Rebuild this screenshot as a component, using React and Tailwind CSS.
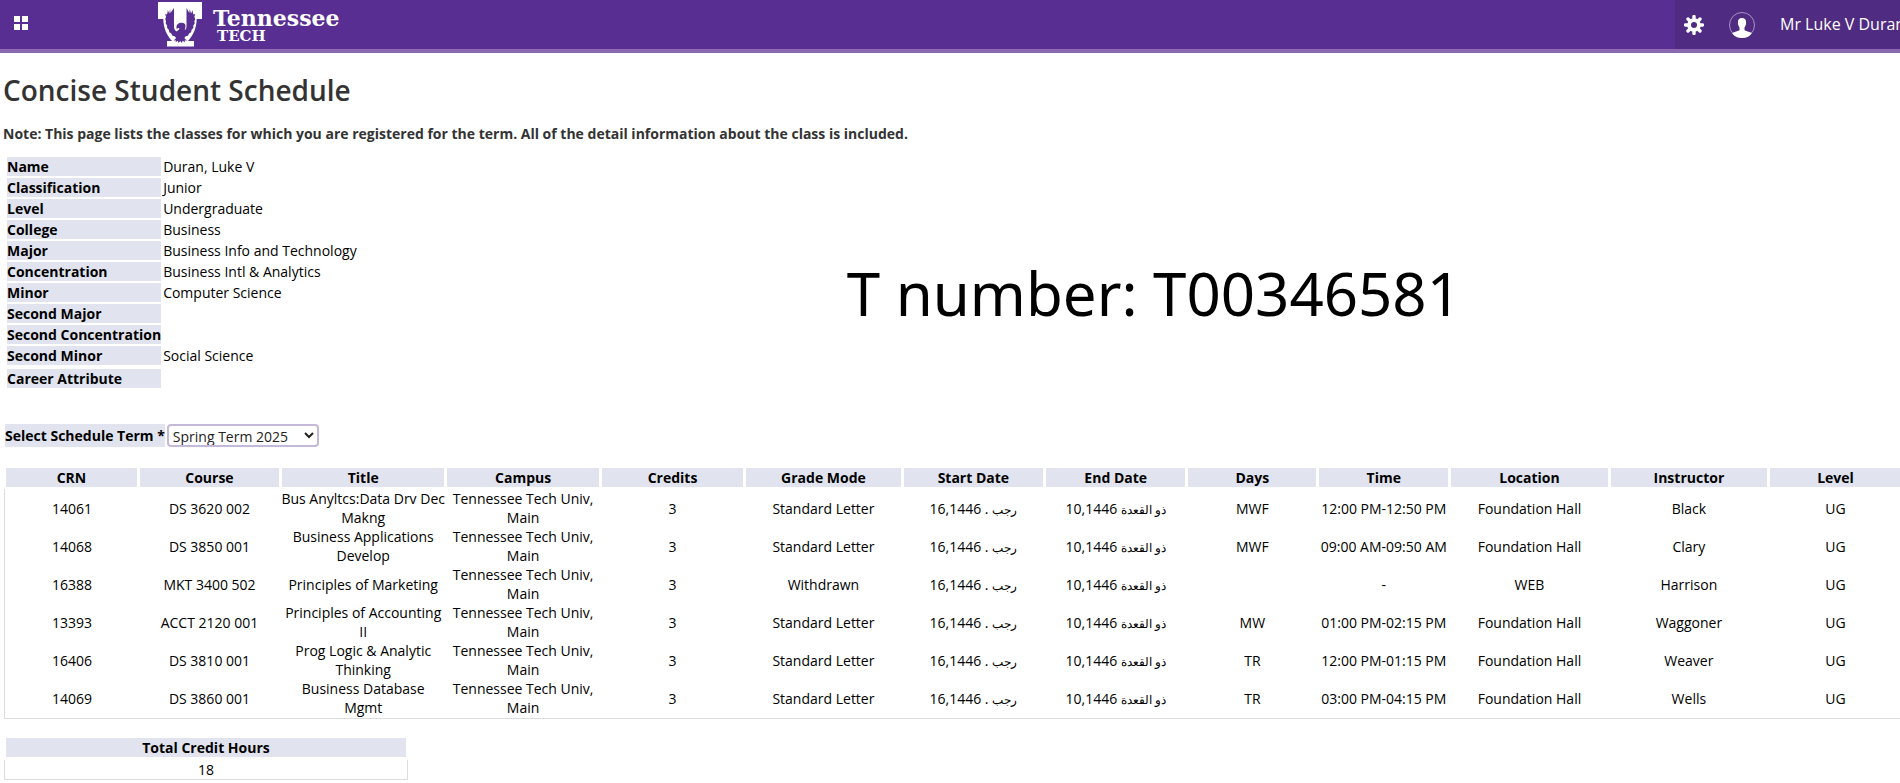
import React from "react";

const profile = [
  ["Name", "Duran, Luke V"],
  ["Classification", "Junior"],
  ["Level", "Undergraduate"],
  ["College", "Business"],
  ["Major", "Business Info and Technology"],
  ["Concentration", "Business Intl & Analytics"],
  ["Minor", "Computer Science"],
  ["Second Major", ""],
  ["Second Concentration", ""],
  ["Second Minor", "Social Science"],
];

const columns = [
  ["CRN", "w-[7.05%]"],
  ["Course", "w-[7.5%]"],
  ["Title", "w-[8.7%]"],
  ["Campus", "w-[8.15%]"],
  ["Credits", "w-[7.6%]"],
  ["Grade Mode", "w-[8.3%]"],
  ["Start Date", "w-[7.5%]"],
  ["End Date", "w-[7.5%]"],
  ["Days", "w-[6.9%]"],
  ["Time", "w-[6.95%]"],
  ["Location", "w-[8.4%]"],
  ["Instructor", "w-[8.4%]"],
  ["Level", "w-[7.05%]"],
];

function HijriDate({ numbers, month }) {
  return (
    <>
      {numbers} <span className="text-[12px] leading-none">{month}</span>
    </>
  );
}

const CAMPUS = "Tennessee Tech Univ, Main";
const START = <HijriDate numbers="16,1446 ." month="رجب" />;
const END = <HijriDate numbers="10,1446" month="ذو القعدة" />;

const classes = [
  ["14061", "DS 3620 002", "Bus Anyltcs:Data Drv Dec Makng", "Standard Letter", "MWF", "12:00 PM-12:50 PM", "Foundation Hall", "Black"],
  ["14068", "DS 3850 001", "Business Applications Develop", "Standard Letter", "MWF", "09:00 AM-09:50 AM", "Foundation Hall", "Clary"],
  ["16388", "MKT 3400 502", "Principles of Marketing", "Withdrawn", "", "-", "WEB", "Harrison"],
  ["13393", "ACCT 2120 001", "Principles of Accounting II", "Standard Letter", "MW", "01:00 PM-02:15 PM", "Foundation Hall", "Waggoner"],
  ["16406", "DS 3810 001", "Prog Logic & Analytic Thinking", "Standard Letter", "TR", "12:00 PM-01:15 PM", "Foundation Hall", "Weaver"],
  ["14069", "DS 3860 001", "Business Database Mgmt", "Standard Letter", "TR", "03:00 PM-04:15 PM", "Foundation Hall", "Wells"],
].map(([crn, course, title, mode, days, time, place, teacher]) => [
  crn, course, title, CAMPUS, "3", mode, START, END, days, time, place, teacher, "UG",
]);

function EagleLogo() {
  return (
    <svg viewBox="0 0 44 45" className="h-[45px] w-[44px] shrink-0" aria-hidden="true">
      <path fill="#fff" d="M0 0h44v17h-5.300C38.500 26 35.500 33 30 39h6v5.500H9V39h5C8.500 33 5.500 26 5.300 17H0z" />
      <path
        fill="#582e93"
        d="M16 6v18.500c0 2.500 1 4 2.600 5L21 27.500c.8-.6.5-1.700-.6-1.600-1 .1-1.300.7-1.300 1.600-1.200-1.800-.8-4.200.7-5.500 1.800-1.600 5-1.800 6.600-.4 1 .9 1.300 2.200 1 3.900l-.7 2.500c1.200-.6 1.800-1.800 1.800-3.500V6l2.800 5 .5-4 1.200 4.500 1.800-3.500c-.2 1.700 0 3 .8 4.500l1.600-.5-.8 3 .8 2-.8 2.200.3 2.300-1.400 2 0 2.500-1.700 1.700-.5 2.500-2 1.300-1.200 2.200-2.200.6-1.400 1.700 2.700 2.700-2.300-.4.3 1.900-2.300-1.500-.7 2.300-1.700-2-1.700 2-.7-2.300-2.300 1.500.3-1.900-2.300.4 2.500-2.700-1.400-1.700-2.200-.6-1.200-2.200-2-1.300-.5-2.500-1.700-1.700v-2.500l-1.400-2 .3-2.300-.8-2.200.8-2-.8-3 1.600.5c.8-1.500 1-2.800.8-4.500l1.800 3.500L12 7l.5 4z"
      />
    </svg>
  );
}

function Header() {
  return (
    <header className="flex h-[53px] items-stretch overflow-hidden border-b-4 border-[#8a69b0] bg-[#582e93] text-white">
      <button type="button" aria-label="Menu" className="ml-[14px] mt-[16px] grid size-[14px] grid-cols-2 gap-[2px]">
        <span className="size-[6px] bg-white" />
        <span className="size-[6px] bg-white" />
        <span className="size-[6px] bg-white" />
        <span className="size-[6px] bg-white" />
      </button>
      <a href="#home" className="ml-[130px] flex items-start gap-[11px] pt-[2px]">
        <EagleLogo />
        <span className="flex flex-col pt-[6px] font-['DejaVu_Serif',serif] font-bold">
          <span className="text-[22px] leading-[21px]">Tennessee</span>
          <span className="pl-[4px] text-[15px] leading-[14px]">TECH</span>
        </span>
      </a>
      <div className="ml-auto flex w-[225px] shrink-0 items-center overflow-hidden bg-[#4f2b81] pl-[9px]">
        <button type="button" aria-label="Settings" className="shrink-0">
          <svg viewBox="-10 -10 20 20" className="size-[20px]" aria-hidden="true">
            <g fill="none" stroke="#fff">
              <circle r="4.900" strokeWidth="3.800" />
              <path strokeWidth="3.400" strokeLinecap="round" d="M0-6v-2.500M0 6v2.500M-6 0h-2.500M6 0h2.500M4.300-4.300l1.700-1.700M4.300 4.300L6 6M-4.300-4.300L-6-6M-4.300 4.300L-6 6" />
            </g>
          </svg>
        </button>
        <button type="button" className="ml-[25px] flex shrink-0 items-center gap-[25px]">
          <svg viewBox="0 0 26 26" className="size-[26px]" aria-hidden="true">
            <circle cx="13" cy="13" r="12.500" fill="none" stroke="#a892c4" strokeWidth="1" />
            <path fill="#fff" d="M13 6c2.800 0 4.300 2 4.100 4.800-.1 2.200-.8 3.700-1.600 4.700v2.500c.8 1.200 5 1.500 7.300 3.200C20.500 24.500 17 26 13 26s-7.500-1.500-9.800-4.800C5.500 19.500 9.700 19.200 10.500 18v-2.500c-.8-1-1.500-2.500-1.600-4.700C8.700 8 10.200 6 13 6z" />
          </svg>
          <span className="whitespace-nowrap text-[16px]">Mr Luke V Duran</span>
        </button>
      </div>
    </header>
  );
}

export default function App() {
  return (
    <div className="min-h-screen overflow-x-hidden bg-white font-['Open_Sans','Noto_Sans',sans-serif] text-[14px] leading-[19px] text-black">
      <Header />
      <main className="pb-[4px] pl-[4px]">
        <div className="-ml-px text-[#333]">
          <h1 className="pt-[18px] text-[28px] font-semibold leading-[38px]">Concise Student Schedule</h1>
          <p className="mt-[15px] font-bold">
            Note: This page lists the classes for which you are registered for the term. All of the detail information about the class is included.
          </p>
        </div>

        <div className="mt-[12px] flex items-start pl-px">
          <table className="border-separate border-spacing-x-[2px] border-spacing-y-[2px] text-left">
            <tbody>
              {profile.map(([label, value]) => (
                <tr key={label}>
                  <th scope="row" className="h-[19px] bg-[#e1e4ee] p-0 font-bold">{label}</th>
                  <td className="p-0">{value}</td>
                </tr>
              ))}
              <tr>
                <th scope="row" className="border-t-2 border-white bg-[#e1e4ee] p-0 font-bold">Career Attribute</th>
                <td />
              </tr>
            </tbody>
          </table>
          <p className="ml-[488px] mt-[96px] whitespace-nowrap font-['Noto_Sans',sans-serif] text-[60px] leading-[84px]">
            T number: T00346581
          </p>
        </div>

        <form className="mt-[34px] flex items-center gap-[2px] pl-px">
          <label htmlFor="term" className="bg-[#e1e4ee] py-[2px] font-bold">Select Schedule Term *</label>
          <select id="term" defaultValue="s25" className="h-[23px] w-[152px] rounded-[4px] border-2 border-[#c5b9da] bg-white text-[14px] leading-[18px] text-[#222]">
            <option value="s25">Spring Term 2025</option>
            <option value="f24">Fall Term 2024</option>
          </select>
        </form>

        <div className="-mr-[2px]">
          <table className="mt-[21px] w-full table-fixed border-separate border-spacing-0 text-center">
            <colgroup>
              {columns.map(([name, width]) => (
                <col key={name} className={width} />
              ))}
            </colgroup>
            <thead>
              <tr>
                {columns.map(([name]) => (
                  <th key={name} scope="col" className="border-b-2 border-l-2 border-r border-white bg-[#e1e4ee] bg-clip-padding p-0 font-bold">
                    {name}
                  </th>
                ))}
              </tr>
            </thead>
            <tbody>
              {classes.map((row, r) => (
                <tr key={row[0]} className="h-[38px]">
                  {row.map((cell, c) => (
                    <td
                      key={c}
                      className={`p-0 pl-px align-middle ${c === 0 ? "border-l border-l-[#dcdcdc]" : ""} ${r === classes.length - 1 ? "border-b border-b-[#dcdcdc] pb-px" : ""}`}
                    >
                      {cell}
                    </td>
                  ))}
                </tr>
              ))}
            </tbody>
          </table>
        </div>

        <table className="mt-[19px] w-[404px] border-separate border-spacing-0 text-center">
          <thead>
            <tr>
              <th scope="col" className="border-x-2 border-b-3 border-white bg-[#e1e4ee] bg-clip-padding p-0 font-bold">Total Credit Hours</th>
            </tr>
          </thead>
          <tbody>
            <tr>
              <td className="border-x border-b border-[#dcdcdc] p-0">18</td>
            </tr>
          </tbody>
        </table>
      </main>
    </div>
  );
}
